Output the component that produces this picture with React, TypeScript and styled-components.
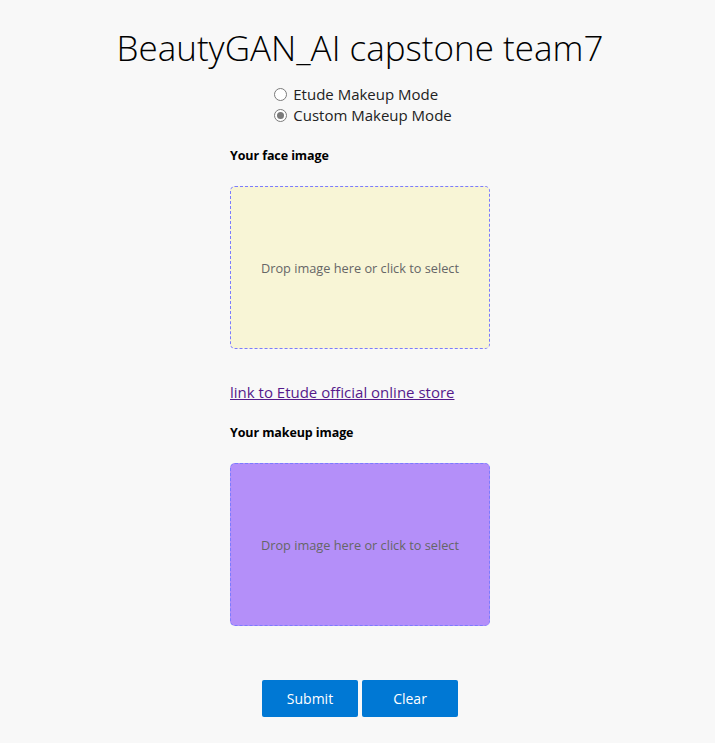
import React, { useState } from "react";
import styled, { createGlobalStyle } from "styled-components";

const Global = createGlobalStyle`
  html, body { margin: 0; padding: 0; background: #f8f8f8; }
  body { font-family: "Open Sans", "Noto Sans", sans-serif; color: #000; }
`;

const Page = styled.div`
  width: 715px;
  min-height: 743px;
  box-sizing: border-box;
  padding-left: 5px;
  display: flex;
  flex-direction: column;
  align-items: center;
`;

const Title = styled.h1`
  margin: 26px 0 0 0;
  font-family: "Open Sans", sans-serif;
  font-weight: 300;
  font-size: 35px;
  line-height: 44px;
  color: #000;
`;

const RadioGroup = styled.div`
  margin-top: 14px;
  display: flex;
  flex-direction: column;
  gap: 1px;
  padding-left: 6px;
`;

const RadioRow = styled.label`
  display: flex;
  align-items: center;
  gap: 6px;
  height: 20px;
  font-size: 15px;
  color: #222;
  cursor: pointer;
`;

const RadioDot = styled.span<{ $checked: boolean }>`
  width: 11px;
  height: 11px;
  border-radius: 50%;
  border: 1px solid #7a7a7a;
  background: #fff;
  display: inline-flex;
  align-items: center;
  justify-content: center;
  &::after {
    content: "";
    width: 7px;
    height: 7px;
    border-radius: 50%;
    background: ${(p) => (p.$checked ? "#7a7a7a" : "transparent")};
  }
`;

const Column = styled.div`
  width: 260px;
  display: flex;
  flex-direction: column;
`;

const FieldLabel = styled.div<{ $top: number }>`
  margin-top: ${(p) => p.$top}px;
  font-size: 12.5px;
  font-weight: 700;
  line-height: 16px;
  letter-spacing: -0.1px;
`;

const DropZone = styled.div<{ $bg: string }>`
  margin-top: 22px;
  height: 163px;
  box-sizing: border-box;
  border: 1px dashed #7b7bff;
  border-radius: 5px;
  background: ${(p) => p.$bg};
  display: flex;
  align-items: center;
  justify-content: center;
  font-size: 12.75px;
  color: #666;
  cursor: pointer;
`;

const StoreLink = styled.a`
  margin-top: 33px;
  font-size: 15px;
  line-height: 20px;
  color: #551a8b;
  text-decoration: underline;
`;

const Buttons = styled.div`
  margin-top: 54px;
  display: flex;
  gap: 4px;
`;

const Button = styled.button`
  width: 96px;
  height: 37px;
  border: none;
  border-radius: 2px;
  background: #0078d4;
  color: #fff;
  font-family: "Open Sans", sans-serif;
  font-size: 14px;
  cursor: pointer;
`;

export default function App() {
  const [mode, setMode] = useState("custom");
  return (
    <>
      <Global />
      <Page>
        <Title>BeautyGAN_AI capstone team7</Title>
        <RadioGroup>
          <RadioRow onClick={() => setMode("etude")}>
            <RadioDot $checked={mode === "etude"} />
            Etude Makeup Mode
          </RadioRow>
          <RadioRow onClick={() => setMode("custom")}>
            <RadioDot $checked={mode === "custom"} />
            Custom Makeup Mode
          </RadioRow>
        </RadioGroup>
        <Column>
          <FieldLabel $top={23}>Your face image</FieldLabel>
          <DropZone $bg="#f8f5d6">Drop image here or click to select</DropZone>
          <StoreLink href="#">link to Etude official online store</StoreLink>
          <FieldLabel $top={23}>Your makeup image</FieldLabel>
          <DropZone $bg="#b48ff9">Drop image here or click to select</DropZone>
        </Column>
        <Buttons>
          <Button>Submit</Button>
          <Button>Clear</Button>
        </Buttons>
      </Page>
    </>
  );
}
